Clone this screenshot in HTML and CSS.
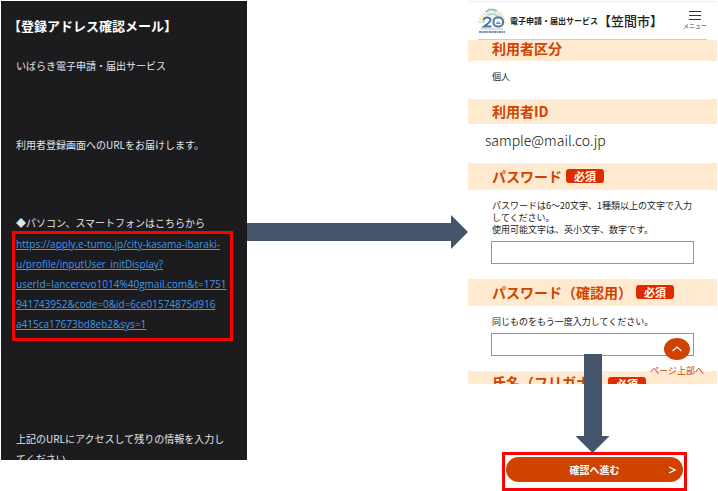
FILE: index.html
```html
<!DOCTYPE html>
<html lang="ja">
<head>
<meta charset="utf-8">
<meta name="viewport" content="width=device-width, initial-scale=1">
<title>利用者登録の流れ</title>
<link rel="stylesheet" href="styles.css">
</head>
<body>
<main class="flow">
  <section class="mail">
    <h1 class="mail-title">【登録アドレス確認メール】</h1>
    <p class="mail-text service">いばらき電子申請・届出サービス</p>
    <p class="mail-text intro">利用者登録画面へのURLをお届けします。</p>
    <p class="mail-text device">◆パソコン、スマートフォンはこちらから</p>
    <div class="mark mail-link">
      <a href="#form">https://apply.e-tumo.jp/city-kasama-ibaraki-<br>u/profile/inputUser_initDisplay?<br>userId=lancerevo1014%40gmail.com&amp;t=1751<br>941743952&amp;code=0&amp;id=6ce01574875d916<br>a415ca17673bd8eb2&amp;sys=1</a>
    </div>
    <p class="mail-text outro">上記のURLにアクセスして残りの情報を入力し<br>てください</p>
  </section>

  <div class="arrow-right"><span class="shaft"></span><span class="head"></span></div>

  <div class="entry">
    <form class="phone" id="form">
      <header class="site-header">
        <svg class="logo" viewBox="0 0 28 26" aria-hidden="true">
          <path d="M2 15A12 12 0 0 1 26 15" fill="none" stroke="#f3e3a0" stroke-width="3" stroke-dasharray="2 1"/>
          <path d="M5 15A9 9 0 0 1 23 15" fill="#fffae2" stroke="#a9d0e6" stroke-width="2"/>
          <path d="M8 4L11 1.500L15 1.500L19 3" fill="none" stroke="#8bb8c9" stroke-width="1.500"/>
          <path d="M5.500 12Q6 9.500 9 9.500Q12.500 9.500 12.500 12Q12.500 14 6 18.500H13.500" fill="none" stroke="#fff" stroke-width="4"/>
          <path d="M5.500 12Q6 9.500 9 9.500Q12.500 9.500 12.500 12Q12.500 14 6 18.500H13.500" fill="none" stroke="#4a77a5" stroke-width="2"/>
          <rect x="15.500" y="9.500" width="9.500" height="9" rx="4" fill="#fff" stroke="#4a77a5" stroke-width="2"/>
          <path d="M17.500 16Q20 11 23 16Z" fill="#5a9cc6"/>
          <path d="M3 21H25" stroke="#a5c6dc" stroke-width="1"/>
          <path d="M1 24H27" stroke="#7f8ba5" stroke-width="2" stroke-dasharray="2 .5"/>
        </svg>
        <span class="site-name">電子申請・届出サービス</span>
        <strong class="city">【笠間市】</strong>
        <button class="menu" type="button">
          <svg viewBox="0 0 14 11" aria-hidden="true"><path d="M1 1.500H13M1 5.500H13M1 9.500H13" stroke="#333" stroke-width="1"/></svg>
          <span>メニュー</span>
        </button>
      </header>
      <h2 class="band band-first">利用者区分</h2>
      <p class="value">個人</p>
      <h2 class="band band-id">利用者ID</h2>
      <p class="address">sample@mail.co.jp</p>
      <div class="band"><label for="password">パスワード</label><span class="badge">必須</span></div>
      <div class="field">
        <p>パスワードは6〜20文字、1種類以上の文字で入力<br>してください。<br>使用可能文字は、英小文字、数字です。</p>
        <input id="password" type="password">
      </div>
      <div class="band"><label for="confirm">パスワード（確認用）</label><span class="badge">必須</span></div>
      <div class="field">
        <p>同じものをもう一度入力してください。</p>
        <input id="confirm" type="password">
      </div>
      <h2 class="band band-cut">氏名（フリガナ）<span class="badge">必須</span></h2>
      <a class="to-top" href="#form">
        <svg viewBox="0 0 26 22" aria-hidden="true"><ellipse cx="13" cy="11" rx="13" ry="11" fill="#d04200"/><path d="M8.500 13L13 9L17.500 13" fill="none" stroke="#fff" stroke-width="1.300"/></svg>
        <span>ページ上部へ</span>
      </a>
    </form>
    <div class="next">
      <div class="arrow-down"><span class="shaft"></span><span class="head"></span></div>
      <div class="mark submit-mark">
        <button class="submit" type="submit" form="form">
          <span>確認へ進む</span>
          <svg viewBox="0 0 8 8" aria-hidden="true"><path d="M1 1L7 4L1 7" fill="none" stroke="#fff" stroke-width="1.200"/></svg>
        </button>
      </div>
    </div>
  </div>
</main>
</body>
</html>
```
FILE: styles.css
```css
* { box-sizing: border-box; }

body {
  margin: 0;
  background: #fff;
  color: #222;
  font-family: "Noto Sans CJK JP", sans-serif;
}

h1, h2, p { margin: 0; }

.flow {
  display: grid;
  grid-template-columns: minmax(0, 246fr) minmax(0, 221fr) minmax(0, 249fr);
  align-items: start;
  padding: 1px 1px 0;
}

.mark { border: 3px solid #f00; }

/* Mail */
.mail {
  padding: 15px 14px 0 11px;
  background: #1c1c1e;
  color: #e4e4e6;
}

.mail-title {
  margin-left: -4px;
  font-size: 13px;
  line-height: 20px;
  color: #fff;
  white-space: nowrap;
}

.mail-text {
  padding-left: 4px;
  font-size: 10px;
  line-height: 20px;
  white-space: nowrap;
}

.service { margin-top: 20px; }
.intro { margin-top: 59px; }
.device { margin-top: 58px; }

.mail-link {
  height: 110px;
  margin-top: -2px;
  padding-left: 1px;
  font-family: "Open Sans", sans-serif;
  font-size: 10px;
  line-height: 20px;
  white-space: nowrap;
}

.mail-link a { color: #4397e8; }

.outro {
  height: 31px;
  margin-top: 88px;
  overflow: hidden;
}

/* Arrows */
.arrow-right {
  display: flex;
  align-items: center;
  margin-top: 214px;
}

.arrow-right .shaft {
  flex: 1;
  height: 18px;
  background: #44546a;
}

.arrow-right .head {
  width: 17px;
  height: 34px;
  background: #44546a;
  clip-path: polygon(0 0, 100% 50%, 0 100%);
}

.arrow-down {
  position: absolute;
  bottom: 38px;
  left: 50%;
  display: flex;
  flex-direction: column;
  align-items: center;
  width: 34px;
  height: 99px;
  margin-left: -17px;
}

.arrow-down .shaft {
  flex: 1;
  width: 18px;
  background: #44546a;
}

.arrow-down .head {
  width: 34px;
  height: 17px;
  background: #44546a;
  clip-path: polygon(0 0, 100% 0, 50% 100%);
}

/* Form */
.phone {
  position: relative;
  border-top: 1px solid #ffead0;
}

.site-header {
  display: flex;
  align-items: center;
  height: 38px;
  margin: 0 10px;
  border-bottom: 1px solid #ccc;
  white-space: nowrap;
}

.logo {
  flex: none;
  width: 28px;
  height: 26px;
  margin-right: 4px;
}

.site-name {
  font-size: 8px;
  font-weight: 700;
}

.city {
  font-size: 13px;
  font-weight: 500;
}

.menu {
  display: flex;
  flex-direction: column;
  align-items: center;
  margin-left: auto;
  padding: 0;
  border: 0;
  background: none;
  color: #333;
  font: 6px/10px "Noto Sans CJK JP", sans-serif;
}

.menu svg {
  width: 14px;
  height: 11px;
}

.band {
  display: flex;
  align-items: center;
  gap: 4px;
  height: 27px;
  padding: 0 0 2px 24px;
  background: #ffead0;
  color: #d04200;
  font-size: 14px;
  font-weight: 700;
  line-height: 20px;
  white-space: nowrap;
}

.band-first {
  height: 21px;
  padding-bottom: 6px;
}

.band-id { height: 25px; }

.band-cut {
  align-items: flex-start;
  height: 13px;
  padding-top: 1px;
  overflow: hidden;
}

.badge {
  width: 38px;
  border-radius: 3px;
  background: #e02b00;
  color: #fff;
  font-size: 11px;
  line-height: 14px;
  text-align: center;
}

.band-cut .badge { margin-top: 5px; }

.value {
  padding: 6px 24px 12px;
  font-size: 9px;
  line-height: 20px;
}

.address {
  padding: 6px 17px 13px;
  color: #111;
  font-size: 14px;
  font-weight: 300;
  line-height: 20px;
}

.field { padding: 10px 23px 15px; }

.field p {
  padding: 0 1px 5px;
  font-size: 9px;
  line-height: 12px;
  white-space: nowrap;
}

.field input {
  display: block;
  width: 100%;
  height: 23px;
  padding: 0 6px;
  border: 1px solid #e57a4c;
  border-radius: 0;
  background: #fff;
}

.to-top {
  position: absolute;
  right: 13px;
  bottom: 6px;
  display: flex;
  flex-direction: column;
  align-items: center;
  gap: 4px;
  color: #d04200;
  font-size: 9px;
  line-height: 14px;
  text-decoration: none;
}

.to-top svg {
  width: 26px;
  height: 22px;
}

.next {
  position: relative;
  padding: 68px 30px 0 34px;
}

.submit-mark { padding: 2px 1px 6px; }

.submit {
  display: flex;
  align-items: center;
  width: 100%;
  height: 25px;
  padding: 0 7px 0 15px;
  border: 0;
  border-radius: 13px;
  background: #d04200;
  color: #fff;
  font: 700 10px/20px "Noto Sans CJK JP", sans-serif;
}

.submit span { flex: 1; }

.submit svg {
  width: 8px;
  height: 8px;
}
```
